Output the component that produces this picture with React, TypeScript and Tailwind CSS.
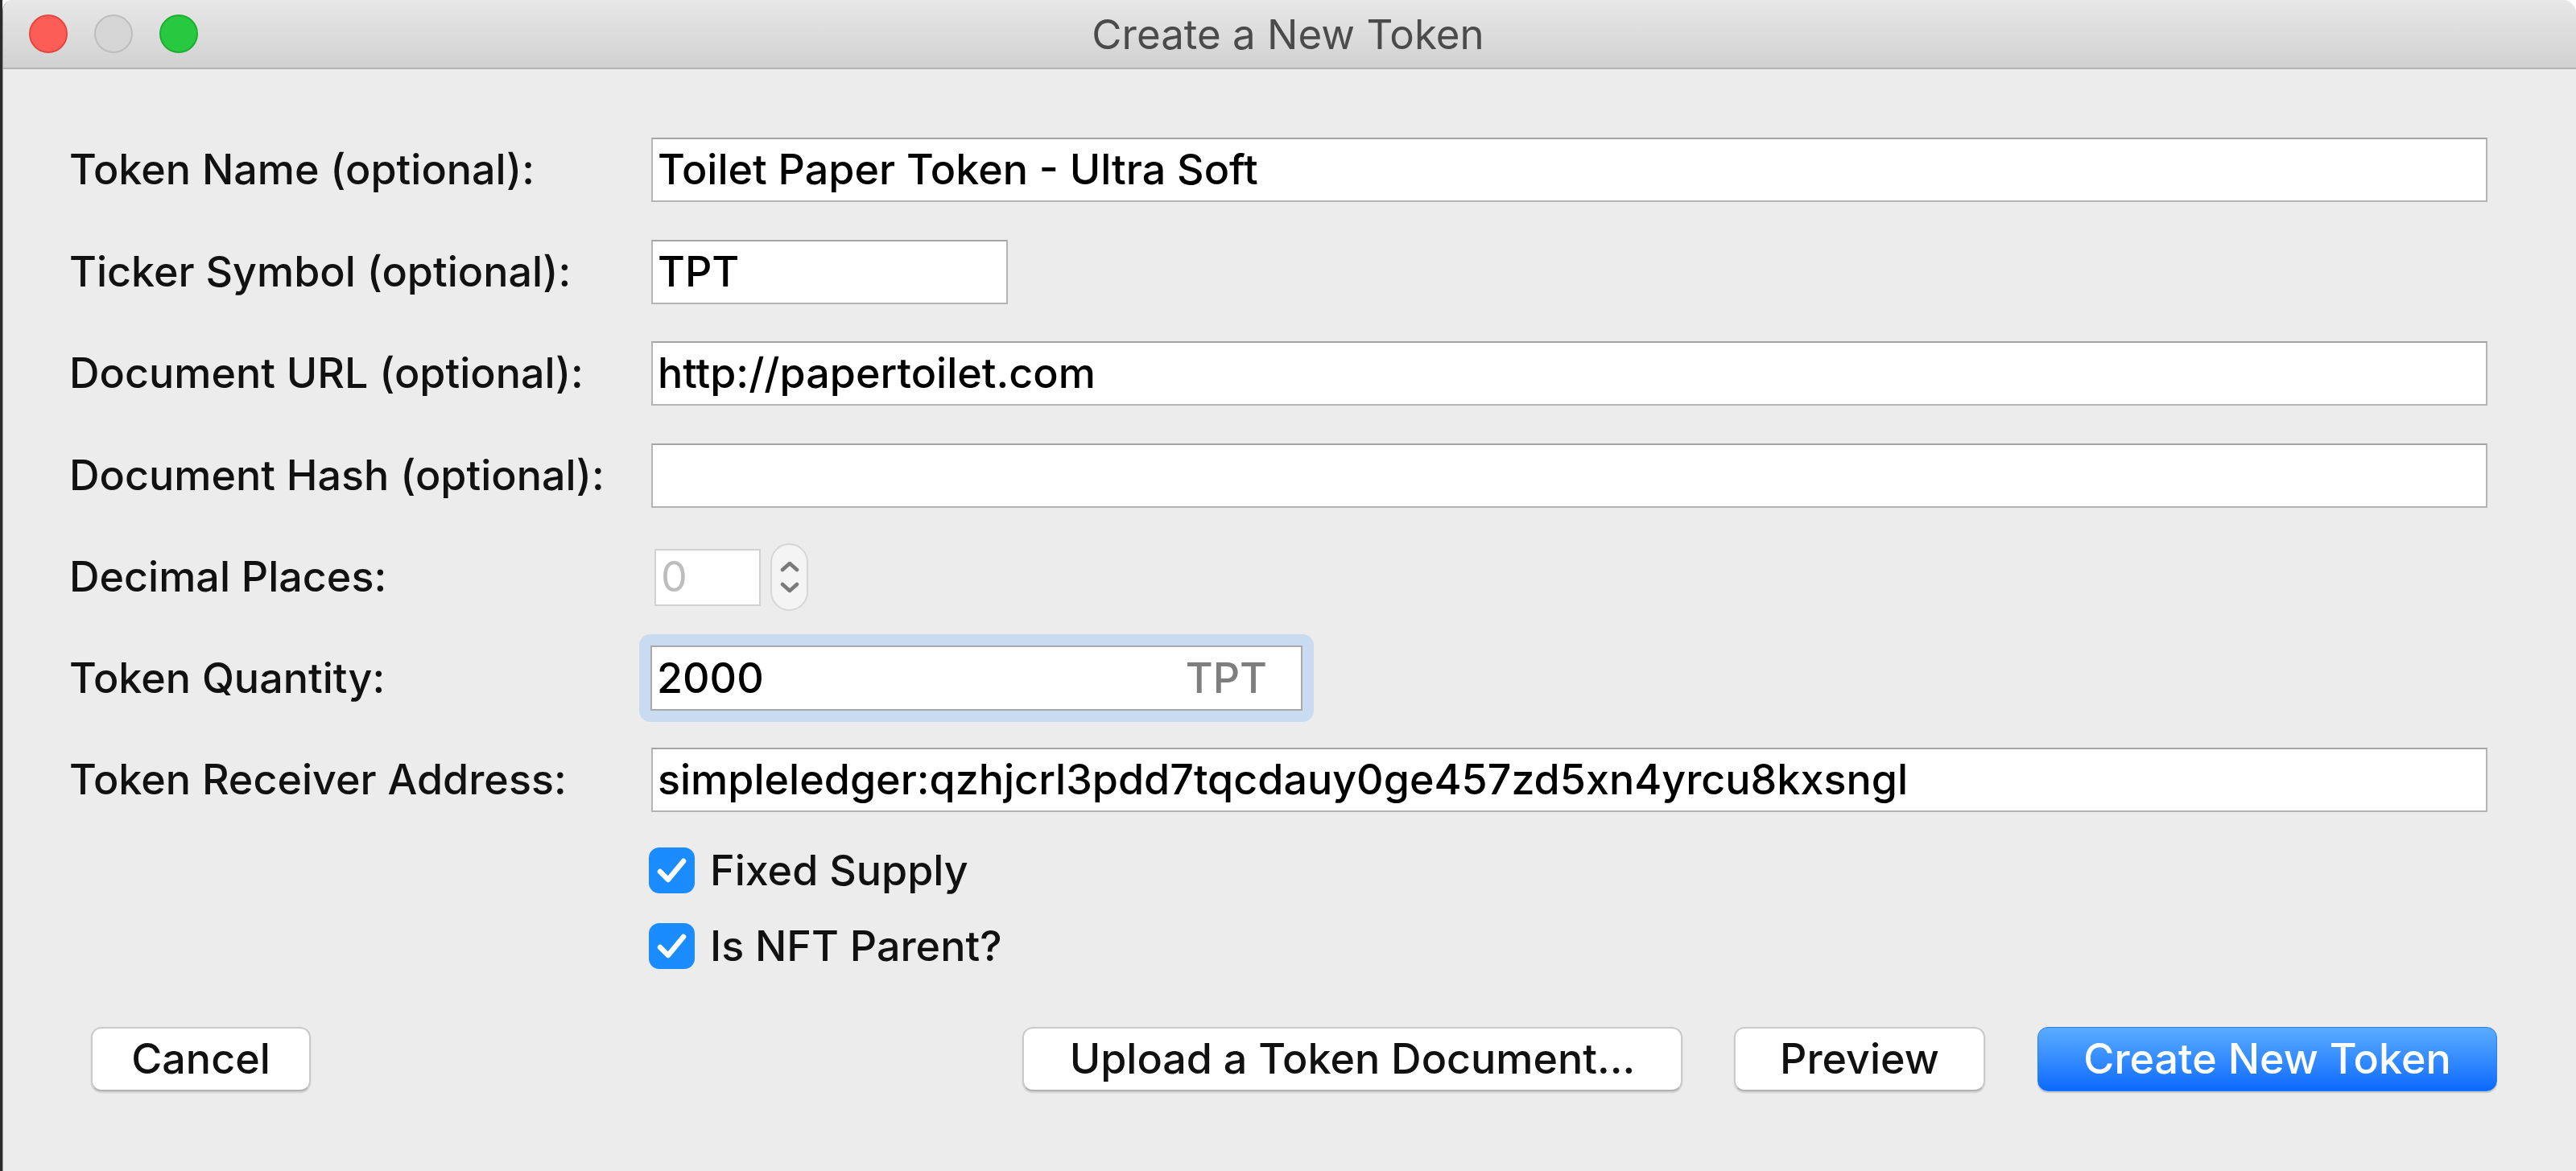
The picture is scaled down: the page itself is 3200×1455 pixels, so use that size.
import React from "react";

const font = { fontFamily: '"Inter", "Liberation Sans", Arial, sans-serif' };

function Label({ children }: { children: React.ReactNode }) {
  return (
    <div className="w-[723px] shrink-0 text-[52px] font-medium leading-none text-[#111111]">
      {children}
    </div>
  );
}

function Field({ value, className = "" }: { value?: string; className?: string }) {
  return (
    <div
      className={
        "h-[80px] bg-white border-2 border-[#b4b4b4] border-t-[#a4a4a4] flex items-center pl-[6px] text-[52px] font-medium leading-none text-black whitespace-nowrap overflow-hidden " +
        className
      }
    >
      {value}
    </div>
  );
}

function Check({ label }: { label: string }) {
  return (
    <div className="flex items-center h-[57px]">
      <div className="w-[57px] h-[57px] rounded-[13px] bg-[#1b8cff] flex items-center justify-center ml-[-3px]">
        <svg width="57" height="57" viewBox="0 0 57 57">
          <path
            d="M14 30 L24 40 L43 17"
            fill="none"
            stroke="white"
            strokeWidth="6.5"
            strokeLinecap="round"
            strokeLinejoin="round"
          />
        </svg>
      </div>
      <div className="ml-[19px] text-[52px] font-medium leading-none text-[#111111]">{label}</div>
    </div>
  );
}

function Button({
  children,
  w,
  primary = false,
}: {
  children: React.ReactNode;
  w: string;
  primary?: boolean;
}) {
  if (primary) {
    return (
      <div
        className={
          w +
          " h-[80px] rounded-[13px] bg-gradient-to-b from-[#5aacff] to-[#0a68ff] border border-[#2a7df5] flex items-center justify-center text-[52px] font-medium leading-none text-white shadow-[0_2px_1px_rgba(0,0,0,0.15)]"
        }
      >
        {children}
      </div>
    );
  }
  return (
    <div
      className={
        w +
        " h-[80px] rounded-[13px] bg-white border-2 border-[#cacaca] border-b-[#b2b2b2] flex items-center justify-center text-[52px] font-medium leading-none text-[#111111] shadow-[0_2px_2px_rgba(0,0,0,0.12)]"
      }
    >
      {children}
    </div>
  );
}

export default function App() {
  return (
    <div className="w-[3200px] h-[1455px] bg-white flex overflow-hidden" style={font}>
      <div className="w-[3px] h-full bg-[#2b2b2b]" />
      <div className="flex-1 flex flex-col rounded-tl-[14px] rounded-tr-[16px] overflow-hidden border-l border-[#9c9c9c]">
        {/* Title bar */}
        <div className="h-[86px] shrink-0 grid grid-cols-[1fr_auto_1fr] items-center bg-gradient-to-b from-[#e8e8e8] to-[#d1d1d1] border-b-2 border-[#b3b3b3]">
          <div className="flex items-center gap-[33px] pl-[32px]">
            <div className="w-[48px] h-[48px] rounded-full bg-[#fc5e57] border-2 border-[#e2463f]" />
            <div className="w-[48px] h-[48px] rounded-full bg-[#d5d5d5] border-2 border-[#bdbdbd]" />
            <div className="w-[48px] h-[48px] rounded-full bg-[#28c840] border-2 border-[#1eae2f]" />
          </div>
          <div className="text-[51px] leading-none text-[#4b4b4b] pr-[4px]">Create a New Token</div>
          <div />
        </div>

        {/* Body */}
        <div className="flex-1 bg-[#ececec] pl-[82px] pr-[110px] flex flex-col">
          <div className="mt-[85px] flex items-center h-[80px]">
            <Label>Token Name (optional):</Label>
            <Field value="Toilet Paper Token - Ultra Soft" className="flex-1" />
          </div>
          <div className="mt-[47px] flex items-center h-[80px]">
            <Label>Ticker Symbol (optional):</Label>
            <Field value="TPT" className="w-[443px]" />
          </div>
          <div className="mt-[46px] flex items-center h-[80px]">
            <Label>Document URL (optional):</Label>
            <Field value="http://papertoilet.com" className="flex-1" />
          </div>
          <div className="mt-[47px] flex items-center h-[80px]">
            <Label>Document Hash (optional):</Label>
            <Field value="" className="flex-1" />
          </div>
          <div className="mt-[44px] flex items-center h-[84px]">
            <Label>Decimal Places:</Label>
            <div className="ml-[4px] w-[132px] h-[71px] bg-white border-2 border-[#d2d2d2] flex items-center pl-[6px] text-[52px] leading-none text-[#bdbdbd]">
              0
            </div>
            <div className="ml-[12px] w-[47px] h-[84px] rounded-full bg-[#f4f4f4] border-2 border-[#d6d6d6] flex flex-col items-center justify-center gap-[12px]">
              <svg width="24" height="14" viewBox="0 0 24 14">
                <path d="M3 11 L12 3 L21 11" fill="none" stroke="#7a7a7a" strokeWidth="4.5" strokeLinecap="round" strokeLinejoin="round" />
              </svg>
              <svg width="24" height="14" viewBox="0 0 24 14">
                <path d="M3 3 L12 11 L21 3" fill="none" stroke="#7a7a7a" strokeWidth="4.5" strokeLinecap="round" strokeLinejoin="round" />
              </svg>
            </div>
          </div>
          <div className="mt-[29px] flex items-center h-[109px]">
            <Label>Token Quantity:</Label>
            <div className="ml-[-15px] p-[14px] rounded-[14px] bg-[#c9dbf1]">
              <div className="w-[810px] h-[81px] bg-white border-2 border-[#a9a9a9] flex items-center justify-between pl-[6px] pr-[42px] text-[52px] font-medium leading-none">
                <span className="text-black">2000</span>
                <span className="text-[#7e7e7e]">TPT</span>
              </div>
            </div>
          </div>
          <div className="mt-[32px] flex items-center h-[80px]">
            <Label>Token Receiver Address:</Label>
            <Field value="simpleledger:qzhjcrl3pdd7tqcdauy0ge457zd5xn4yrcu8kxsngl" className="flex-1" />
          </div>
          <div className="mt-[44px] flex items-center">
            <div className="w-[723px] shrink-0" />
            <Check label="Fixed Supply" />
          </div>
          <div className="mt-[37px] flex items-center">
            <div className="w-[723px] shrink-0" />
            <Check label="Is NFT Parent?" />
          </div>
          <div className="mt-[72px] flex items-center justify-between mr-[-12px]">
            <div className="ml-[27px]">
              <Button w="w-[273px]">Cancel</Button>
            </div>
            <div className="flex items-center">
              <Button w="w-[820px]">Upload a Token Document...</Button>
              <div className="w-[64px]" />
              <Button w="w-[312px]">Preview</Button>
              <div className="w-[65px]" />
              <Button w="w-[571px]" primary>
                Create New Token
              </Button>
            </div>
          </div>
        </div>
      </div>
    </div>
  );
}
